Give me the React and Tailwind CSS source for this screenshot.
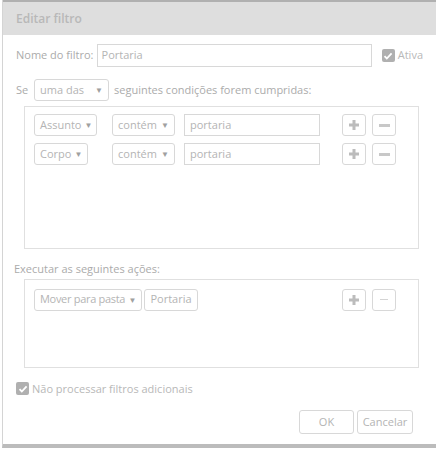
function Caret() {
  return <span className="ml-auto pl-[3px] text-[8px] text-[#a0a0a0]">▼</span>;
}

function Select({ label, width, tight }) {
  return (
    <div
      className={`flex h-[22px] items-center whitespace-nowrap rounded-[3px] border border-[#d8d8d8] px-[5px] text-[#b4b4b4] ${width} ${tight ? "tracking-[-0.3px]" : ""}`}
    >
      <span>{label}</span>
      <Caret />
    </div>
  );
}

function Plus() {
  return (
    <div className="flex h-[22px] w-[24px] items-center justify-center rounded-[3px] border border-[#d8d8d8]">
      <svg width="12" height="12" viewBox="0 0 12 12">
        <path d="M4.5 1h3v3.5H11v3H7.5V11h-3V7.5H1v-3h3.5z" fill="#bcbcbc" />
      </svg>
    </div>
  );
}

function Minus({ faded }) {
  return (
    <div className="flex h-[22px] w-[24px] items-center justify-center rounded-[3px] border border-[#d8d8d8]">
      <div className={faded ? "h-[1px] w-[8px] bg-[#d4d4d4]" : "h-[3px] w-[11px] bg-[#c8c8c8]"} />
    </div>
  );
}

function Check() {
  return (
    <div className="flex h-[13px] w-[13px] items-center justify-center rounded-[2px] bg-[#b0b0b0]">
      <svg width="10" height="10" viewBox="0 0 10 10">
        <path d="M1.5 5.2l2.3 2.3L8.6 2.3" stroke="#fff" strokeWidth="1.8" fill="none" />
      </svg>
    </div>
  );
}

function Condition({ field, fieldWidth }) {
  return (
    <div className="flex items-center">
      <Select label={field} width={fieldWidth} />
      <div className={fieldWidth === "w-[63px]" ? "w-[15px]" : "w-[24px]"} />
      <Select label="contém" width="w-[63px]" />
      <div className="w-[9px]" />
      <div className="flex h-[22px] w-[136px] items-center border border-[#d8d8d8] px-[5px] text-[#b4b4b4]">
        portaria
      </div>
      <div className="w-[22px]" />
      <Plus />
      <div className="w-[6px]" />
      <Minus />
    </div>
  );
}

export default function App() {
  return (
    <div
      className="h-[456px] w-[437px] whitespace-nowrap bg-white text-[11px]"
      style={{ fontFamily: '"Open Sans", "Noto Sans", sans-serif' }}
    >
      <div className="ml-[2px] flex h-[448px] w-[434px] flex-col border-b-[4px] border-l border-[#bcbcbc] border-l-[#d4d4d4]">
        {/* Title bar */}
        <div className="flex h-[35px] items-center border-t-2 border-[#b0b0b0] bg-[#dedede] pl-[13px]">
          <span className="text-[12px] font-semibold text-[#b8b8b8]">Editar filtro</span>
        </div>

        <div className="flex flex-1 flex-col px-[13px] text-[#ababab]">
          {/* Name */}
          <div className="mt-[9px] flex items-center">
            <span className="w-[82px]">Nome do filtro:</span>
            <div className="flex h-[23px] w-[280px] items-center border border-[#d8d8d8] px-[4px] text-[#b4b4b4]">
              Portaria
            </div>
            <div className="ml-[10px] flex items-center gap-[3px]">
              <Check />
              <span className="text-[#b8b8b8]">Ativa</span>
            </div>
          </div>

          {/* Se ... */}
          <div className="mt-[12px] flex items-center">
            <span className="w-[18px]">Se</span>
            <Select label="uma das" width="w-[75px]" />
            <span className="ml-[5px]">seguintes condições forem cumpridas:</span>
          </div>

          {/* Conditions */}
          <div className="mt-[5px] ml-[8px] flex h-[143px] w-[395px] flex-col gap-[7px] border border-[#e0e0e0] pl-[9px] pt-[7px]">
            <Condition field="Assunto" fieldWidth="w-[63px]" />
            <Condition field="Corpo" fieldWidth="w-[54px]" />
          </div>

          <div className="mt-[12px] -ml-[2px]">Executar as seguintes ações:</div>

          {/* Actions */}
          <div className="mt-[1px] ml-[8px] flex h-[89px] w-[395px] border border-[#e0e0e0] pl-[9px] pt-[9px]">
            <div className="flex h-[22px] items-center">
              <Select label="Mover para pasta" width="w-[108px]" tight />
              <div className="ml-[2px] flex h-[22px] w-[54px] items-center justify-center rounded-[3px] border border-[#d8d8d8] text-[#b4b4b4]">
                Portaria
              </div>
              <div className="w-[144px]" />
              <Plus />
              <div className="w-[6px]" />
              <Minus faded />
            </div>
          </div>

          <div className="mt-[13px] flex items-center gap-[3px]">
            <Check />
            <span className="text-[#b8b8b8]">Não processar filtros adicionais</span>
          </div>

          <div className="mt-[13px] flex justify-end gap-[3px] pr-[10px]">
            <div className="flex h-[24px] w-[55px] items-center justify-center rounded-[3px] border border-[#d8d8d8] text-[#b4b4b4]">
              OK
            </div>
            <div className="flex h-[24px] w-[56px] items-center justify-center rounded-[3px] border border-[#d8d8d8] text-[#b4b4b4]">
              Cancelar
            </div>
          </div>
        </div>
      </div>
    </div>
  );
}
